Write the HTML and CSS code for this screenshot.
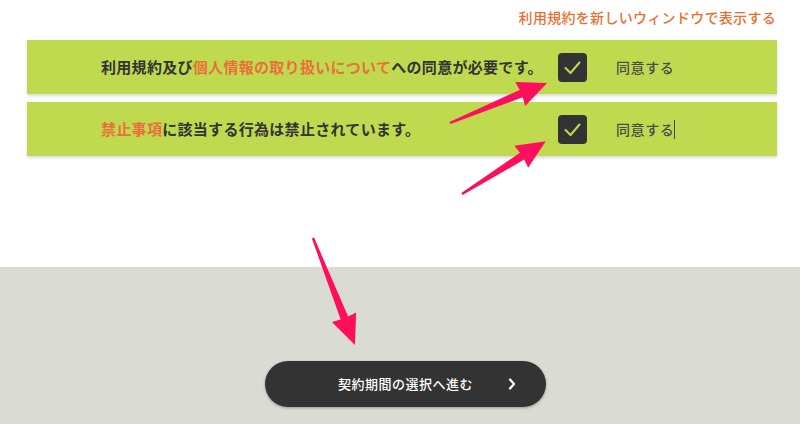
FILE: index.html
```html
<!DOCTYPE html>
<html lang="ja">
<head>
<meta charset="utf-8">
<title>同意</title>
<link rel="stylesheet" href="styles.css">
</head>
<body>
<div class="page">
  <section class="top">
    <div class="header">
      <a class="terms-link" href="#">利用規約を新しいウィンドウで表示する</a>
    </div>
    <div class="bars">
      <div class="bar">
        <p class="bar-text">利用規約及び<span class="hl">個人情報の取り扱いについて</span>への同意が必要です。</p>
        <span class="check">
          <svg viewBox="0 0 29 29" width="29" height="29"><polyline points="7.5,15 12.5,20 21.5,9.5" fill="none" stroke="#c0da50" stroke-width="2" stroke-linecap="round" stroke-linejoin="round"/></svg>
        </span>
        <span class="agree">同意する</span>
      </div>
      <div class="bar">
        <p class="bar-text"><span class="hl">禁止事項</span>に該当する行為は禁止されています。</p>
        <span class="check">
          <svg viewBox="0 0 29 29" width="29" height="29"><polyline points="7.5,15 12.5,20 21.5,9.5" fill="none" stroke="#c0da50" stroke-width="2" stroke-linecap="round" stroke-linejoin="round"/></svg>
        </span>
        <span class="agree">同意する<span class="caret"></span></span>
      </div>
    </div>
  </section>
  <section class="bottom">
    <button class="next" type="button">
      <span class="next-label">契約期間の選択へ進む</span>
      <svg class="chev" viewBox="0 0 8 12" width="8" height="12"><polyline points="2,1.5 6,6 2,10.5" fill="none" stroke="#fff" stroke-width="2.2" stroke-linecap="round" stroke-linejoin="round"/></svg>
    </button>
  </section>
  <svg class="arrows" viewBox="0 0 800 424" width="800" height="424">
    <g fill="#fe0f5d">
      <polygon transform="translate(450 123) rotate(-22.4)" points="0,-1.2 77,-4 76,-13 105,0 76,13 77,4 0,1.2"/>
      <polygon transform="translate(462 194) rotate(-32.2)" points="0,-1.2 71,-4 70,-13 99,0 70,13 71,4 0,1.2"/>
      <polygon transform="translate(313 238) rotate(68.6)" points="0,-1.2 86,-4 85,-13 115,0 85,13 86,4 0,1.2"/>
    </g>
  </svg>
</div>
</body>
</html>
```

FILE: styles.css
```css
* { box-sizing: border-box; }
html, body {
  margin: 0;
  padding: 0;
  background: #ffffff;
}
body {
  font-family: "Noto Sans CJK JP", "Noto Sans", sans-serif;
  color: #333333;
}
.page {
  position: relative;
  width: 800px;
  height: 424px;
  overflow: hidden;
  display: flex;
  flex-direction: column;
}
.top {
  height: 267px;
  background: #ffffff;
}
.header {
  height: 40px;
  padding: 7px 24px 0 0;
  display: flex;
  justify-content: flex-end;
}
.terms-link {
  font-size: 14px;
  line-height: 20px;
  letter-spacing: 0.3px;
  font-weight: 500;
  color: #e86f31;
  text-decoration: none;
}
.bars {
  margin: 0 23px 0 27px;
  display: flex;
  flex-direction: column;
  gap: 8px;
}
.bar {
  height: 54px;
  background: #c0da50;
  box-shadow: 0 2px 3px rgba(0, 0, 0, 0.14);
  display: flex;
  align-items: center;
  padding-left: 74px;
}
.bar-text {
  margin: 0;
  flex: 0 0 457px;
  font-size: 15px;
  line-height: 20px;
  font-weight: 700;
  letter-spacing: 0.3px;
  color: #333333;
}
.hl {
  color: #e8703a;
}
.check {
  flex: 0 0 29px;
  width: 29px;
  height: 29px;
  background: #333333;
  border-radius: 4px;
  display: flex;
}
.agree {
  margin-left: 29px;
  font-size: 14px;
  line-height: 20px;
  font-weight: 500;
  letter-spacing: 0.6px;
  color: #4a4a4a;
  display: inline-flex;
  align-items: center;
}
.caret {
  display: inline-block;
  width: 1px;
  height: 19px;
  background: #444444;
}
.bottom {
  flex: 1;
  background: #dadbd3;
  display: flex;
  justify-content: center;
  padding: 94px 0 0 11px;
}
.next {
  width: 281px;
  height: 46px;
  border: none;
  border-radius: 23px;
  background: #333333;
  box-shadow: 0 1px 3px rgba(0, 0, 0, 0.3);
  display: flex;
  align-items: center;
  padding: 0 30px 0 73px;
  font-family: "Noto Sans CJK JP", "Noto Sans", sans-serif;
  cursor: pointer;
}
.next-label {
  font-size: 13px;
  line-height: 20px;
  letter-spacing: 0.5px;
  font-weight: 500;
  color: #ffffff;
}
.chev {
  margin-left: auto;
}
.arrows {
  position: absolute;
  top: 0;
  left: 0;
  pointer-events: none;
}
```
